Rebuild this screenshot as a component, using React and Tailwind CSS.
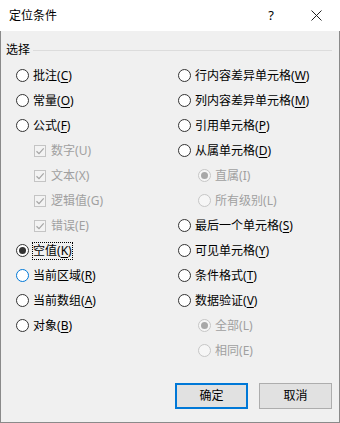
import React from "react";

const font = { fontFamily: '"Noto Sans", "Noto Sans CJK SC", sans-serif' };

function Radio({ checked, disabled, hover }) {
  const cls = disabled
    ? "border-[#c6c6c6] bg-[#f6f6f6]"
    : hover
    ? "border-[#0078d7] bg-white"
    : "border-[#333333] bg-white";
  return (
    <span className={`flex h-[13px] w-[13px] shrink-0 items-center justify-center rounded-full border ${cls}`}>
      {checked && (
        <span className={`h-[7px] w-[7px] rounded-full ${disabled ? "bg-[#a8a8a8]" : "bg-[#333333]"}`} />
      )}
    </span>
  );
}

function Check() {
  return (
    <span className="flex h-[12px] w-[12px] shrink-0 items-center justify-center border border-[#c4c4c4] bg-[#f3f3f3]">
      <svg width="10" height="10" viewBox="0 0 10 10">
        <path d="M1.5 5.2 L4 7.6 L8.7 2.4" fill="none" stroke="#a5a5a5" strokeWidth="1.2" />
      </svg>
    </span>
  );
}

function Label({ text, k, disabled, focus }) {
  return (
    <span
      className={`leading-[16px] text-[12px] whitespace-nowrap ${disabled ? "text-[#a0a0a0]" : "text-black"} ${
        focus ? "outline-1 outline-dotted outline-black" : ""
      }`}
    >
      {text}(
      {disabled ? k : <span className="underline underline-offset-[2px]">{k}</span>})
    </span>
  );
}

function RadioRow({ text, k, checked, hover, focus }) {
  return (
    <div className="flex h-[25px] items-center gap-[4px]">
      <Radio checked={checked} hover={hover} />
      <Label text={text} k={k} focus={focus} />
    </div>
  );
}

function SubRadioRow({ text, k, checked }) {
  return (
    <div className="flex h-[25px] items-center gap-[4px] pl-[20px]">
      <Radio checked={checked} disabled />
      <Label text={text} k={k} disabled />
    </div>
  );
}

function CheckRow({ text, k }) {
  return (
    <div className="flex h-[25px] items-center gap-[5px] pl-[18px]">
      <Check />
      <Label text={text} k={k} disabled />
    </div>
  );
}

export default function App() {
  return (
    <div className="flex h-[423px] w-[340px] flex-col overflow-hidden" style={font}>
      <div className="flex h-[31px] shrink-0 items-center bg-white pl-[9px] pr-[18px] text-[12px] text-black">
        <span className="flex-1">定位条件</span>
        <span className="mr-[37px] text-[13px]">?</span>
        <svg width="11" height="11" viewBox="0 0 11 11">
          <path d="M0.5 0.5 L10.5 10.5 M10.5 0.5 L0.5 10.5" stroke="#222" strokeWidth="1" />
        </svg>
      </div>
      <div className="flex flex-1 flex-col border-x border-b border-[#8a8a8a] bg-[#f0f0f0]">
        <div className="mt-[11px] flex h-[16px] items-center pl-[5px] pr-[7px]">
          <span className="text-[12px] leading-[16px] text-black">选择</span>
          <span className="ml-[3px] h-px flex-1 bg-[#dcdcdc]" />
        </div>
        <div className="mt-[5px] flex pl-[15px]">
          <div className="flex w-[162px] flex-col">
            <RadioRow text="批注" k="C" />
            <RadioRow text="常量" k="O" />
            <RadioRow text="公式" k="F" />
            <CheckRow text="数字" k="U" />
            <CheckRow text="文本" k="X" />
            <CheckRow text="逻辑值" k="G" />
            <CheckRow text="错误" k="E" />
            <RadioRow text="空值" k="K" checked focus />
            <RadioRow text="当前区域" k="R" hover />
            <RadioRow text="当前数组" k="A" />
            <RadioRow text="对象" k="B" />
          </div>
          <div className="flex flex-col">
            <RadioRow text="行内容差异单元格" k="W" />
            <RadioRow text="列内容差异单元格" k="M" />
            <RadioRow text="引用单元格" k="P" />
            <RadioRow text="从属单元格" k="D" />
            <SubRadioRow text="直属" k="I" checked />
            <SubRadioRow text="所有级别" k="L" />
            <RadioRow text="最后一个单元格" k="S" />
            <RadioRow text="可见单元格" k="Y" />
            <RadioRow text="条件格式" k="T" />
            <RadioRow text="数据验证" k="V" />
            <SubRadioRow text="全部" k="L" checked />
            <SubRadioRow text="相同" k="E" />
          </div>
        </div>
        <div className="mt-[20px] flex justify-end gap-[11px] pr-[7px]">
          <button className="flex h-[26px] w-[73px] items-center justify-center border-2 border-[#0078d7] bg-[#e1e1e1] text-[12px] text-black">
            确定
          </button>
          <button className="flex h-[26px] w-[73px] items-center justify-center border border-[#adadad] bg-[#e1e1e1] text-[12px] text-black">
            取消
          </button>
        </div>
      </div>
    </div>
  );
}
